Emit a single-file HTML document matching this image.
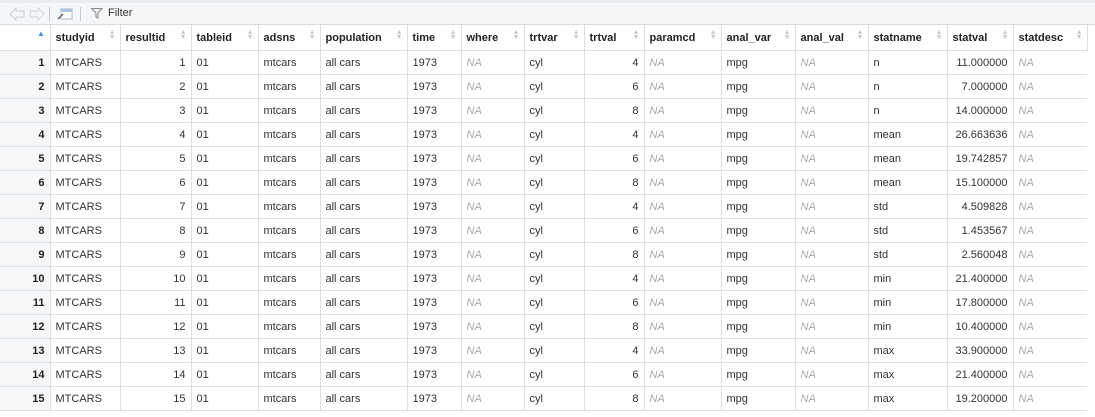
<!DOCTYPE html>
<html><head><meta charset="utf-8"><style>
body{margin:0;width:1095px;height:417px;background:#fff;font-family:"Liberation Sans",sans-serif;font-size:11px;color:#333;overflow:hidden;position:relative}
.strip{position:absolute;left:0;top:0;width:1095px;height:3px;background:#e9ecef;border-bottom:1px solid #d6dadf}
.tb{position:absolute;left:0;top:3px;width:1095px;height:21px;background:#f4f6f8;border-bottom:1px solid #d6dadf}
.sep{position:absolute;top:4px;width:1px;height:14px;background:#c8ccd0}
table{position:absolute;left:0;top:25px;border-collapse:collapse;table-layout:fixed}
td,th{border:1px solid #dcdfe3;padding:0 5px;height:23px;white-space:nowrap;overflow:hidden}
th{height:25px;text-align:left;font-weight:bold;color:#222;position:relative;border-top:none}
th .s{position:absolute;right:4px;top:5px;color:#c8ccd0;font-size:7px;line-height:5px}
td.n{background:#f5f7f8;text-align:right;font-weight:bold;color:#222;border-left:none}
th.n{background:#fff;border-left:none}
.r{text-align:right}
.na{color:#aaa;font-style:italic}
tr>td:last-child{border-right:none}
</style></head><body>
<div class="strip"></div>
<div class="tb">
<svg style="position:absolute;left:9px;top:4px" width="36" height="14"><path d="M1 7 L7 1 L7 4 L15 4 L15 10 L7 10 L7 13 Z" fill="none" stroke="#c8ccd0"/><path d="M35 7 L29 1 L29 4 L21 4 L21 10 L29 10 L29 13 Z" fill="none" stroke="#d4d8dc"/></svg>
<div class="sep" style="left:49px"></div>
<svg style="position:absolute;left:57px;top:3px" width="16" height="15"><rect x="4" y="3" width="11" height="10" fill="#fff" stroke="#b0b6bc"/><rect x="4" y="3" width="11" height="3" fill="#a8c4e0"/><path d="M1 13 L6 8" stroke="#667" stroke-width="1.5"/></svg>
<div class="sep" style="left:80px"></div>
<svg style="position:absolute;left:91px;top:5px" width="12" height="11"><path d="M0.5 0.5 H11 L7 5 V10 L5 9 V5 Z" fill="none" stroke="#888"/></svg>
<span style="position:absolute;left:108px;top:4px;color:#333">Filter</span>
</div>
<table>
<colgroup><col style="width:50px"><col style="width:70px"><col style="width:71px"><col style="width:67px"><col style="width:62px"><col style="width:87px"><col style="width:54px"><col style="width:63px"><col style="width:60px"><col style="width:60px"><col style="width:77px"><col style="width:74px"><col style="width:73px"><col style="width:79px"><col style="width:66px"><col style="width:74px"></colgroup>
<tr><th class="n"><span style="position:absolute;left:37px;top:4px;color:#3a8ee6;font-size:8px">▲</span></th><th>studyid<span class="s">▲<br>▼</span></th><th>resultid<span class="s">▲<br>▼</span></th><th>tableid<span class="s">▲<br>▼</span></th><th>adsns<span class="s">▲<br>▼</span></th><th>population<span class="s">▲<br>▼</span></th><th>time<span class="s">▲<br>▼</span></th><th>where<span class="s">▲<br>▼</span></th><th>trtvar<span class="s">▲<br>▼</span></th><th>trtval<span class="s">▲<br>▼</span></th><th>paramcd<span class="s">▲<br>▼</span></th><th>anal_var<span class="s">▲<br>▼</span></th><th>anal_val<span class="s">▲<br>▼</span></th><th>statname<span class="s">▲<br>▼</span></th><th>statval<span class="s">▲<br>▼</span></th><th>statdesc<span class="s">▲<br>▼</span></th></tr>
<tr><td class="n">1</td><td>MTCARS</td><td class="r">1</td><td>01</td><td>mtcars</td><td>all cars</td><td>1973</td><td class="na">NA</td><td>cyl</td><td class="r">4</td><td class="na">NA</td><td>mpg</td><td class="na">NA</td><td>n</td><td class="r">11.000000</td><td class="na">NA</td></tr>
<tr><td class="n">2</td><td>MTCARS</td><td class="r">2</td><td>01</td><td>mtcars</td><td>all cars</td><td>1973</td><td class="na">NA</td><td>cyl</td><td class="r">6</td><td class="na">NA</td><td>mpg</td><td class="na">NA</td><td>n</td><td class="r">7.000000</td><td class="na">NA</td></tr>
<tr><td class="n">3</td><td>MTCARS</td><td class="r">3</td><td>01</td><td>mtcars</td><td>all cars</td><td>1973</td><td class="na">NA</td><td>cyl</td><td class="r">8</td><td class="na">NA</td><td>mpg</td><td class="na">NA</td><td>n</td><td class="r">14.000000</td><td class="na">NA</td></tr>
<tr><td class="n">4</td><td>MTCARS</td><td class="r">4</td><td>01</td><td>mtcars</td><td>all cars</td><td>1973</td><td class="na">NA</td><td>cyl</td><td class="r">4</td><td class="na">NA</td><td>mpg</td><td class="na">NA</td><td>mean</td><td class="r">26.663636</td><td class="na">NA</td></tr>
<tr><td class="n">5</td><td>MTCARS</td><td class="r">5</td><td>01</td><td>mtcars</td><td>all cars</td><td>1973</td><td class="na">NA</td><td>cyl</td><td class="r">6</td><td class="na">NA</td><td>mpg</td><td class="na">NA</td><td>mean</td><td class="r">19.742857</td><td class="na">NA</td></tr>
<tr><td class="n">6</td><td>MTCARS</td><td class="r">6</td><td>01</td><td>mtcars</td><td>all cars</td><td>1973</td><td class="na">NA</td><td>cyl</td><td class="r">8</td><td class="na">NA</td><td>mpg</td><td class="na">NA</td><td>mean</td><td class="r">15.100000</td><td class="na">NA</td></tr>
<tr><td class="n">7</td><td>MTCARS</td><td class="r">7</td><td>01</td><td>mtcars</td><td>all cars</td><td>1973</td><td class="na">NA</td><td>cyl</td><td class="r">4</td><td class="na">NA</td><td>mpg</td><td class="na">NA</td><td>std</td><td class="r">4.509828</td><td class="na">NA</td></tr>
<tr><td class="n">8</td><td>MTCARS</td><td class="r">8</td><td>01</td><td>mtcars</td><td>all cars</td><td>1973</td><td class="na">NA</td><td>cyl</td><td class="r">6</td><td class="na">NA</td><td>mpg</td><td class="na">NA</td><td>std</td><td class="r">1.453567</td><td class="na">NA</td></tr>
<tr><td class="n">9</td><td>MTCARS</td><td class="r">9</td><td>01</td><td>mtcars</td><td>all cars</td><td>1973</td><td class="na">NA</td><td>cyl</td><td class="r">8</td><td class="na">NA</td><td>mpg</td><td class="na">NA</td><td>std</td><td class="r">2.560048</td><td class="na">NA</td></tr>
<tr><td class="n">10</td><td>MTCARS</td><td class="r">10</td><td>01</td><td>mtcars</td><td>all cars</td><td>1973</td><td class="na">NA</td><td>cyl</td><td class="r">4</td><td class="na">NA</td><td>mpg</td><td class="na">NA</td><td>min</td><td class="r">21.400000</td><td class="na">NA</td></tr>
<tr><td class="n">11</td><td>MTCARS</td><td class="r">11</td><td>01</td><td>mtcars</td><td>all cars</td><td>1973</td><td class="na">NA</td><td>cyl</td><td class="r">6</td><td class="na">NA</td><td>mpg</td><td class="na">NA</td><td>min</td><td class="r">17.800000</td><td class="na">NA</td></tr>
<tr><td class="n">12</td><td>MTCARS</td><td class="r">12</td><td>01</td><td>mtcars</td><td>all cars</td><td>1973</td><td class="na">NA</td><td>cyl</td><td class="r">8</td><td class="na">NA</td><td>mpg</td><td class="na">NA</td><td>min</td><td class="r">10.400000</td><td class="na">NA</td></tr>
<tr><td class="n">13</td><td>MTCARS</td><td class="r">13</td><td>01</td><td>mtcars</td><td>all cars</td><td>1973</td><td class="na">NA</td><td>cyl</td><td class="r">4</td><td class="na">NA</td><td>mpg</td><td class="na">NA</td><td>max</td><td class="r">33.900000</td><td class="na">NA</td></tr>
<tr><td class="n">14</td><td>MTCARS</td><td class="r">14</td><td>01</td><td>mtcars</td><td>all cars</td><td>1973</td><td class="na">NA</td><td>cyl</td><td class="r">6</td><td class="na">NA</td><td>mpg</td><td class="na">NA</td><td>max</td><td class="r">21.400000</td><td class="na">NA</td></tr>
<tr><td class="n">15</td><td>MTCARS</td><td class="r">15</td><td>01</td><td>mtcars</td><td>all cars</td><td>1973</td><td class="na">NA</td><td>cyl</td><td class="r">8</td><td class="na">NA</td><td>mpg</td><td class="na">NA</td><td>max</td><td class="r">19.200000</td><td class="na">NA</td></tr>
</table>
</body></html>
